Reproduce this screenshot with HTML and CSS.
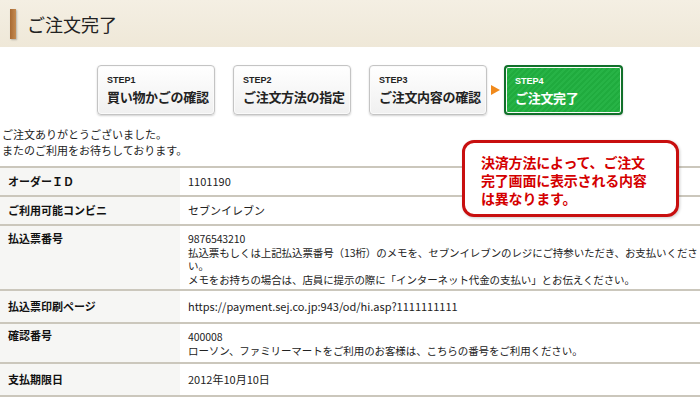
FILE: index.html
```html
<!DOCTYPE html>
<html lang="ja">
<head>
<meta charset="utf-8">
<link rel="stylesheet" href="styles.css">
</head>
<body>
<div class="page">
  <header class="head">
    <span class="head-bar"></span>
    <h1 class="head-title">ご注文完了</h1>
  </header>

  <nav class="steps">
    <div class="step">
      <div class="step-no">STEP1</div>
      <div class="step-name">買い物かごの確認</div>
    </div>
    <div class="step">
      <div class="step-no">STEP2</div>
      <div class="step-name">ご注文方法の指定</div>
    </div>
    <div class="step">
      <div class="step-no">STEP3</div>
      <div class="step-name">ご注文内容の確認</div>
    </div>
    <span class="step-arrow"></span>
    <div class="step step-current">
      <div class="step-no">STEP4</div>
      <div class="step-name">ご注文完了</div>
    </div>
  </nav>

  <p class="thanks">ご注文ありがとうございました。<br>またのご利用をお待ちしております。</p>

  <div class="info">
    <table class="info-table">
      <colgroup>
        <col class="col-label">
        <col>
      </colgroup>
      <tr>
        <th>オーダーＩＤ</th>
        <td>1101190</td>
      </tr>
      <tr>
        <th>ご利用可能コンビニ</th>
        <td>セブンイレブン</td>
      </tr>
      <tr class="r3">
        <th>払込票番号</th>
        <td class="multi">9876543210<br>払込票もしくは上記払込票番号（13桁）のメモを、セブンイレブンのレジにご持参いただき、お支払いくださ<br>い。<br>メモをお持ちの場合は、店員に提示の際に「インターネット代金の支払い」とお伝えください。</td>
      </tr>
      <tr class="tall">
        <th>払込票印刷ページ</th>
        <td>https://payment.sej.co.jp:943/od/hi.asp?1111111111</td>
      </tr>
      <tr class="r5">
        <th>確認番号</th>
        <td class="multi">400008<br>ローソン、ファミリーマートをご利用のお客様は、こちらの番号をご利用ください。</td>
      </tr>
      <tr class="tall">
        <th>支払期限日</th>
        <td>2012年10月10日</td>
      </tr>
    </table>

    <div class="callout">決済方法によって、ご注文<br>完了画面に表示される内容<br>は異なります。</div>
  </div>
</div>
</body>
</html>
```

FILE: styles.css
```css
* { box-sizing: border-box; }
html, body { margin: 0; padding: 0; background: #fff; }
body {
  font-family: "Noto Sans CJK JP", "Noto Sans", sans-serif;
  color: #222;
  font-size: 11px;
}
.page { width: 700px; height: 406px; overflow: hidden; position: relative; }

.head {
  height: 47px;
  background: linear-gradient(#f4efe3, #efe8d8);
  display: flex;
  align-items: center;
  padding-left: 10px;
}
.head-bar {
  width: 6px;
  height: 30px;
  background: linear-gradient(90deg, #a86a33, #c48b52);
  box-shadow: 1px 1px 2px rgba(0,0,0,0.25);
}
.head-title {
  margin: 0 0 0 11px;
  font-size: 18px;
  font-weight: normal;
  color: #222;
  line-height: 1;
}

.steps {
  display: flex;
  align-items: center;
  gap: 18px;
  padding-left: 97px;
  margin-top: 18px;
}
.step {
  width: 118px;
  height: 50px;
  border: 1px solid #c4c4c4;
  border-radius: 4px;
  background: linear-gradient(#ffffff, #f0f0f0);
  box-shadow: 0 1px 2px rgba(0,0,0,0.18), inset 0 0 0 1px #fafafa;
  padding: 9px 0 0 9px;
}
.step-no {
  font-family: "Liberation Sans", Arial, sans-serif;
  font-weight: bold;
  font-size: 9px;
  line-height: 11px;
  color: #222;
}
.step-name {
  font-weight: bold;
  font-size: 13px;
  line-height: 18px;
  margin-top: 2px;
  color: #222;
  letter-spacing: -0.3px;
}
.step-arrow {
  width: 0;
  height: 0;
  border-left: 9px solid #f08a1c;
  border-top: 5px solid transparent;
  border-bottom: 5px solid transparent;
  margin: 0 -14px 0 -14px;
}
.step-current {
  width: 119px;
  background: repeating-linear-gradient(135deg, #20ab3e 0 2px, #27b346 2px 4px);
  border: 2px solid #11702a;
  color: #fff;
}
.step-current .step-no,
.step-current .step-name { color: #fff; }

.thanks {
  margin: 11px 0 0 2px;
  line-height: 16px;
  font-size: 11px;
  color: #222;
}

.info { position: relative; margin-top: 8px; }
.info-table {
  width: 100%;
  table-layout: fixed;
  border-collapse: collapse;
  border-top: 2px solid #cbc7bc;
}
.col-label { width: 180px; }
.info-table th,
.info-table td {
  border-bottom: 2px solid #cbc7bc;
  padding: 7px 8px;
  vertical-align: top;
  text-align: left;
  line-height: 13px;
  font-size: 11px;
}
.info-table th {
  background: #f6f6f4;
  font-weight: bold;
  color: #111;
}
.info-table td { color: #222; }
.info-table td.multi {
  font-size: 10.5px;
  line-height: 13.5px;
  padding-top: 6px;
  padding-bottom: 3px;
  white-space: nowrap;
  letter-spacing: -0.1px;
}
.info-table tr.r3 th { padding-top: 6px; }
.info-table tr.r5 th { padding-top: 5px; }
.info-table tr.r5 td { padding-top: 6px; padding-bottom: 5px; }
.info-table tr.tall th,
.info-table tr.tall td { padding-top: 9px; padding-bottom: 9px; }

.callout {
  position: absolute;
  left: 462px;
  top: -26px;
  width: 217px;
  height: 77px;
  background: #fff;
  border: 3px solid #c80f0f;
  border-radius: 12px;
  box-shadow: 1px 1px 3px rgba(0,0,0,0.2);
  color: #d40000;
  font-weight: bold;
  font-size: 14px;
  line-height: 18px;
  padding: 10px 0 0 16px;
  letter-spacing: -0.2px;
}
```
